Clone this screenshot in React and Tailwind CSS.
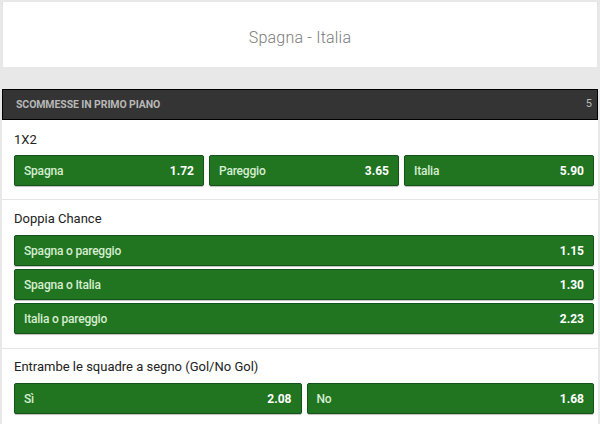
import React from 'react';

const Odd = ({ label, value }) => (
    <div className="flex-1 h-[31px] flex items-center justify-between px-[9px] bg-[#217521] border border-[#13521a] rounded-[2px] shadow-[0_1px_1px_rgba(0,0,0,0.25)]">
        <span className="text-[12px] font-medium text-[#d6eed0] tracking-[-0.2px]">{label}</span>
        <span className="text-[12px] font-bold text-white">{value}</span>
    </div>
);

const App = () => {
    const doppia = [
        ['Spagna o pareggio', '1.15'],
        ['Spagna o Italia', '1.30'],
        ['Italia o pareggio', '2.23'],
    ];

    return (
        <div className="w-[600px] h-[424px] bg-[#e8e8e8] overflow-hidden font-['Roboto',sans-serif] pt-[2px]">
            {/* match title */}
            <div className="mx-[2px] h-[65px] bg-white border-l border-r border-[#e4e4e4] flex items-center justify-center pt-[7px]">
                <h1 className="text-[16px] font-light text-[#7a7a7a] tracking-[0.2px]">Spagna - Italia</h1>
            </div>

            <div className="h-[22px]"></div>

            <div className="mx-[2px] bg-white">
                <div className="h-[31px] bg-[#343434] border border-black flex items-center justify-between pl-[13px] pr-[5px]">
                    <span className="text-[10.5px] font-bold text-[#b8b8b8] tracking-[-0.1px]">SCOMMESSE IN PRIMO PIANO</span>
                    <span className="text-[11px] text-[#b8b8b8]">5</span>
                </div>

                {/* 1X2 */}
                <section className="pt-[11px] pb-[13px] pl-[12px] pr-[4px] border-b border-[#e6e6e6]">
                    <h2 className="text-[13px] text-[#222] leading-[18px] mb-[6px]">1X2</h2>
                    <div className="flex gap-[5px]">
                        <Odd label="Spagna" value="1.72" />
                        <Odd label="Pareggio" value="3.65" />
                        <Odd label="Italia" value="5.90" />
                    </div>
                </section>

                {/* Doppia chance */}
                <section className="pt-[10px] pb-[14px] pl-[12px] pr-[4px] border-b border-[#e6e6e6]">
                    <h2 className="text-[13px] text-[#222] leading-[18px] mb-[7px]">Doppia Chance</h2>
                    <div className="flex flex-col gap-[3px]">
                        {doppia.map(([l, v]) => (
                            <div key={l} className="flex">
                                <Odd label={l} value={v} />
                            </div>
                        ))}
                    </div>
                </section>

                {/* Gol / No Gol */}
                <section className="pt-[9px] pb-[14px] pl-[12px] pr-[4px]">
                    <h2 className="text-[13px] text-[#222] leading-[18px] mb-[7px]">Entrambe le squadre a segno (Gol/No Gol)</h2>
                    <div className="flex gap-[5px]">
                        <Odd label="Sì" value="2.08" />
                        <Odd label="No" value="1.68" />
                    </div>
                </section>
            </div>
        </div>
    );
};

export default App;
